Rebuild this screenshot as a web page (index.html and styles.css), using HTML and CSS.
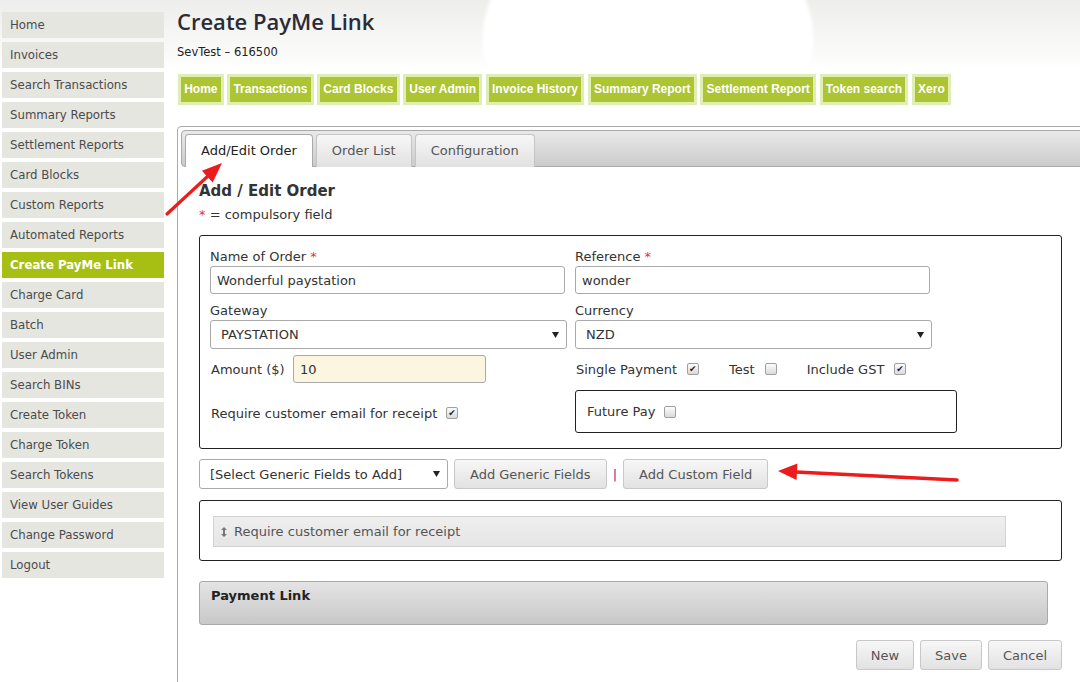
FILE: index.html
```html
<!DOCTYPE html>
<html lang="en">

<head>
    <meta charset="UTF-8">
    <meta name="viewport" content="width=device-width, initial-scale=1.0">
    <title>Create PayMe Link</title>

    <link rel="stylesheet" href="styles.css">
</head>

<body>
    <div class="page">
        <nav class="sidebar">
            <a href="#">Home</a>
            <a href="#">Invoices</a>
            <a href="#">Search Transactions</a>
            <a href="#">Summary Reports</a>
            <a href="#">Settlement Reports</a>
            <a href="#">Card Blocks</a>
            <a href="#">Custom Reports</a>
            <a href="#">Automated Reports</a>
            <a class="active" href="#">Create PayMe Link</a>
            <a href="#">Charge Card</a>
            <a href="#">Batch</a>
            <a href="#">User Admin</a>
            <a href="#">Search BINs</a>
            <a href="#">Create Token</a>
            <a href="#">Charge Token</a>
            <a href="#">Search Tokens</a>
            <a href="#">View User Guides</a>
            <a href="#">Change Password</a>
            <a href="#">Logout</a>
        </nav>

        <div class="main">
            <h1>Create PayMe Link</h1>
            <p class="merchant">SevTest &ndash; 616500</p>

            <div class="topnav">
                <a href="#">Home</a>
                <a href="#">Transactions</a>
                <a href="#">Card Blocks</a>
                <a href="#">User Admin</a>
                <a href="#">Invoice History</a>
                <a href="#">Summary Report</a>
                <a href="#">Settlement Report</a>
                <a href="#">Token search</a>
                <a href="#">Xero</a>
            </div>

            <div class="panel">
                <div class="tabbar">
                    <a class="tab active" href="#">Add/Edit Order</a>
                    <a class="tab" href="#">Order List</a>
                    <a class="tab" href="#">Configuration</a>
                </div>

                <div class="tabbody">
                    <h2>Add / Edit Order</h2>
                    <p class="note"><span class="req">*</span> = compulsory field</p>

                    <div class="formbox">
                        <div class="field">
                            <label>Name of Order <span class="req">*</span></label>
                            <input class="txt" type="text" value="Wonderful paystation">
                        </div>
                        <div class="field">
                            <label>Reference <span class="req">*</span></label>
                            <input class="txt" type="text" value="wonder">
                        </div>

                        <div class="field">
                            <label>Gateway</label>
                            <div class="select">
                                <span>PAYSTATION</span>
                                <svg class="caret" width="7" height="6" viewBox="0 0 7 6"><path d="M0 0H7L3.5 6Z" fill="#222"/></svg>
                            </div>
                        </div>
                        <div class="field">
                            <label>Currency</label>
                            <div class="select">
                                <span>NZD</span>
                                <svg class="caret" width="7" height="6" viewBox="0 0 7 6"><path d="M0 0H7L3.5 6Z" fill="#222"/></svg>
                            </div>
                        </div>

                        <div class="inline">
                            <label>Amount ($)</label>
                            <input class="txt amount" type="text" value="10">
                        </div>
                        <div class="checks">
                            <span class="check">Single Payment <span class="cb on"></span></span>
                            <span class="check">Test <span class="cb"></span></span>
                            <span class="check">Include GST <span class="cb on"></span></span>
                        </div>

                        <div class="email">
                            <span>Require customer email for receipt</span>
                            <span class="cb on"></span>
                        </div>
                        <div class="future">
                            <span>Future Pay</span>
                            <span class="cb"></span>
                        </div>
                    </div>

                    <div class="addrow">
                        <div class="select gsel">
                            <span>[Select Generic Fields to Add]</span>
                            <svg class="caret" width="7" height="6" viewBox="0 0 7 6"><path d="M0 0H7L3.5 6Z" fill="#222"/></svg>
                        </div>
                        <button class="btn">Add Generic Fields</button>
                        <span class="sep">|</span>
                        <button class="btn">Add Custom Field</button>
                    </div>

                    <div class="fieldbox">
                        <div class="fieldbar">
                            <svg width="6" height="10" viewBox="0 0 6 10"><path d="M3 0L6 3H4V7H6L3 10L0 7H2V3H0Z" fill="#777"/></svg>
                            <span>Require customer email for receipt</span>
                        </div>
                    </div>

                    <div class="linkpanel">Payment Link</div>

                    <div class="actions">
                        <button class="btn">New</button>
                        <button class="btn">Save</button>
                        <button class="btn">Cancel</button>
                    </div>
                </div>
            </div>
        </div>
    </div>

    <!-- annotation arrows drawn over the screenshot -->
    <svg class="arrows" width="1080" height="682" viewBox="0 0 1080 682">
        <line x1="167" y1="214" x2="208" y2="176" stroke="#ec1c1c" stroke-width="3.2" stroke-linecap="round"/>
        <polygon points="222,163 212.7,182.5 201.9,170.7" fill="#ec1c1c"/>
        <line x1="957" y1="480" x2="796" y2="472" stroke="#ec1c1c" stroke-width="3.5" stroke-linecap="round"/>
        <polygon points="778,471 797.4,463.5 796.6,480" fill="#ec1c1c"/>
    </svg>
</body>

</html>
```

FILE: styles.css
```css
* {
    padding: 0;
    margin: 0;
    box-sizing: border-box;
}

html,
body {
    height: 100%;
    overflow: hidden;
}

body {
    font-family: "DejaVu Sans", Verdana, sans-serif;
    font-size: 13px;
    color: #333;
    background-color: #fff;
    background-image:
        radial-gradient(ellipse 168px 125px at 648px 38px, #fff 97%, rgba(255, 255, 255, 0) 100%),
        linear-gradient(#ededeb 0, #f7f7f6 40px, #fff 72px);
    background-repeat: no-repeat;
}

.page {
    display: flex;
}

/* left menu */

.sidebar {
    width: 177px;
    flex-shrink: 0;
    padding-top: 12px;
}

.sidebar a {
    display: block;
    width: 162px;
    height: 26px;
    line-height: 26px;
    margin-left: 2px;
    margin-bottom: 4px;
    padding-left: 8px;
    background-color: #e6e6e1;
    color: #4b4b4b;
    font-size: 11.75px;
    text-decoration: none;
}

.sidebar a.active {
    background-color: #a7bf12;
    color: white;
    font-weight: bold;
}

/* main column */

.main {
    flex: 1;
    min-width: 0;
    padding-top: 7px;
}

h1 {
    font-family: "Open Sans", sans-serif;
    font-weight: 600;
    font-size: 22px;
    line-height: 28px;
    color: #2b2b38;
}

.merchant {
    margin-top: 9px;
    font-size: 11.5px;
    line-height: 16px;
    color: #222;
}

.topnav {
    display: flex;
    gap: 3.5px;
    margin-top: 14px;
    margin-left: 1px;
}

.topnav a {
    border: 3px solid #e0edb3;
    background-color: #adc433;
    color: white;
    font-family: "Liberation Sans", Arial, sans-serif;
    font-weight: bold;
    font-size: 12px;
    line-height: 25px;
    padding: 0 3.2px;
    text-decoration: none;
}

/* tab panel */

.panel {
    width: 930px;
    min-height: 620px;
    margin-top: 21px;
    padding: 3px;
    border: 1px solid #aaa;
    border-radius: 4px;
}

.tabbar {
    display: flex;
    align-items: flex-start;
    gap: 3px;
    height: 37px;
    padding: 3px 3px 0;
    border: 1px solid #aaa;
    border-radius: 4px;
    background: linear-gradient(#e9e9e9, #cbcbcb);
}

.tab {
    height: 33px;
    line-height: 31px;
    padding: 0 15px;
    border: 1px solid #c4c4c4;
    border-bottom: none;
    border-radius: 4px 4px 0 0;
    background: linear-gradient(#f7f7f7, #e1e1e1);
    color: #555;
    text-decoration: none;
}

.tab.active {
    background: white;
    border-color: #aaa;
    color: #222;
}

.tabbody {
    padding: 14px 0 0 18px;
}

h2 {
    font-size: 15px;
    line-height: 20px;
    color: #333;
}

.note {
    margin-top: 6px;
    line-height: 16px;
}

.req {
    color: #e3342c;
}

/* order form */

.formbox {
    display: grid;
    grid-template-columns: 357px 357px;
    grid-template-rows: 46px 55px 34px 50px;
    column-gap: 8px;
    align-items: end;
    width: 863px;
    margin-top: 12px;
    padding: 12px 10px 15px;
    border: 1px solid #222;
    border-radius: 3px;
}

.field label {
    display: block;
    line-height: 17px;
    margin-bottom: 1px;
}

.txt {
    display: block;
    width: 355px;
    height: 28px;
    padding: 0 6px;
    border: 1px solid #aaa;
    border-radius: 3px;
    font: inherit;
    color: #333;
    background-color: white;
    outline: none;
}

.select {
    display: flex;
    align-items: center;
    justify-content: space-between;
    height: 29px;
    padding: 0 7px 0 10px;
    border: 1px solid #aaa;
    border-radius: 3px;
    background-color: white;
}

.inline {
    display: flex;
    align-items: center;
}

.inline label {
    width: 83px;
    padding-left: 1px;
}

.txt.amount {
    width: 193px;
    background-color: #fcf5e0;
}

.checks {
    display: flex;
    align-items: center;
    height: 28px;
    padding-left: 1px;
    white-space: nowrap;
}

.check {
    display: flex;
    align-items: center;
    flex-shrink: 0;
    gap: 10px;
    margin-right: 30px;
}

.check:last-child {
    margin-right: 0;
}

.cb {
    display: inline-block;
    position: relative;
    flex-shrink: 0;
    width: 12px;
    height: 12px;
    border: 1px solid #9f9f9f;
    border-radius: 2px;
    background: linear-gradient(#fcfcfc, #dadada);
}

.cb.on::after {
    content: "\2714";
    position: absolute;
    left: 1px;
    top: -1px;
    font-size: 9px;
    line-height: 12px;
    color: #222;
}

.email {
    display: flex;
    align-items: center;
    gap: 9px;
    height: 43px;
    padding-left: 1px;
    padding-top: 3px;
}

.future {
    display: flex;
    align-items: center;
    gap: 9px;
    width: 382px;
    height: 43px;
    padding-left: 11px;
    border: 1px solid #222;
    border-radius: 3px;
}

/* generic fields */

.addrow {
    display: flex;
    align-items: center;
    gap: 6px;
    margin-top: 10px;
}

.gsel {
    width: 249px;
    height: 30px;
}

.btn {
    height: 30px;
    padding: 0 15px;
    border: 1px solid #c8c8c8;
    border-radius: 3px;
    background: linear-gradient(#f7f7f7, #e2e2e2);
    color: #555;
    font: inherit;
    cursor: pointer;
}

.sep {
    color: #8b2b8b;
}

.fieldbox {
    width: 863px;
    margin-top: 11px;
    padding: 15px 0 13px 13px;
    border: 1px solid #222;
    border-radius: 3px;
}

.fieldbar {
    display: flex;
    align-items: center;
    gap: 7px;
    width: 793px;
    height: 31px;
    padding-left: 7px;
    border: 1px solid #d2d2d2;
    background: linear-gradient(#efefef, #e5e5e5);
    color: #555;
}

.linkpanel {
    width: 849px;
    height: 44px;
    margin-top: 20px;
    padding: 6px 11px;
    border: 1px solid #aaa;
    border-radius: 3px;
    background: linear-gradient(#e4e4e4, #c8c8c8);
    font-size: 13px;
    font-weight: bold;
    line-height: 16px;
    color: #222;
}

.actions {
    display: flex;
    justify-content: flex-end;
    gap: 6px;
    width: 863px;
    margin-top: 15px;
}

.actions .btn {
    padding: 0 14px;
}

.arrows {
    position: absolute;
    top: 0;
    left: 0;
    pointer-events: none;
}
```
